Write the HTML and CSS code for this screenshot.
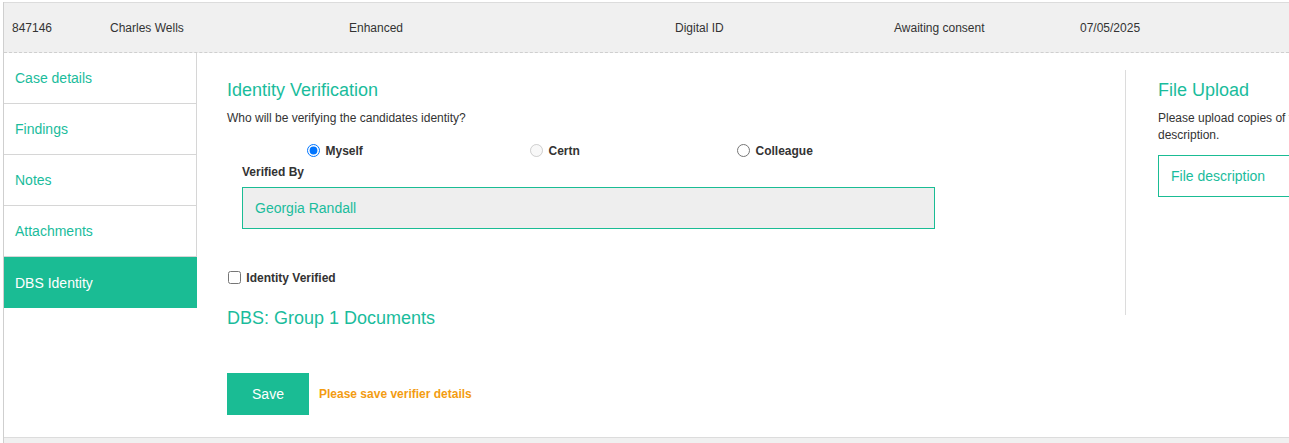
FILE: index.html
```html
<!DOCTYPE html>
<html lang="en">
<head>
    <meta charset="UTF-8">
    <meta name="viewport" content="width=device-width, initial-scale=1.0">
    <title>DBS Identity - Case 847146</title>
    <link rel="stylesheet" href="styles.css">
</head>
<body>
    <div class="page">
        <!-- Resumo do caso -->
        <div class="case-bar">
            <span>847146</span>
            <span>Charles Wells</span>
            <span>Enhanced</span>
            <span>Digital ID</span>
            <span>Awaiting consent</span>
            <span>07/05/2025</span>
        </div>

        <div class="case-body">
            <nav class="case-nav">
                <a href="#" class="nav-item">Case details</a>
                <a href="#" class="nav-item">Findings</a>
                <a href="#" class="nav-item">Notes</a>
                <a href="#" class="nav-item">Attachments</a>
                <a href="#" class="nav-item active">DBS Identity</a>
            </nav>

            <main class="case-main">
                <h2 class="section-title">Identity Verification</h2>
                <p class="question">Who will be verifying the candidates identity?</p>

                <div class="verifier-options">
                    <label class="option"><input type="radio" name="verifier" checked> Myself</label>
                    <label class="option"><input type="radio" name="verifier" disabled> Certn</label>
                    <label class="option"><input type="radio" name="verifier"> Colleague</label>
                </div>

                <div class="field">
                    <label class="field-label">Verified By</label>
                    <div class="field-value">Georgia Randall</div>
                </div>

                <label class="check"><input type="checkbox"> Identity Verified</label>

                <h2 class="section-title docs-title">DBS: Group 1 Documents</h2>

                <div class="actions">
                    <button class="btn-save">Save</button>
                    <span class="warning">Please save verifier details</span>
                </div>
            </main>

            <aside class="upload">
                <h2 class="section-title">File Upload</h2>
                <p class="upload-text">Please upload copies of the identity documents, adding a file description.</p>
                <div class="upload-input">File description</div>
            </aside>
        </div>

        <footer class="page-foot"></footer>
    </div>
</body>
</html>
```

FILE: styles.css
```css
body {
    font-family: "Liberation Sans", Arial, sans-serif;
    margin: 0;
    padding: 0;
    background-color: #fff;
    color: #333;
    overflow: hidden;
}

.page {
    margin: 2px 0 0 3px;
    border-left: 1px solid #cfcfcf;
    min-height: 441px;
    display: flex;
    flex-direction: column;
}

/* barra com os dados do caso */
.case-bar {
    display: grid;
    grid-template-columns: 98px 239px 326px 219px 186px 1fr;
    align-items: center;
    height: 49px;
    padding-left: 8px;
    background-color: #f0f0f0;
    border-top: 1px solid #dcdcdc;
    border-bottom: 1px dashed #cfcfcf;
    font-size: 12px;
}

.case-body {
    display: flex;
    flex: 1;
}

.case-nav {
    width: 193px;
    flex-shrink: 0;
    display: flex;
    flex-direction: column;
}

.nav-item {
    display: flex;
    align-items: center;
    height: 50px;
    padding-left: 11px;
    border-bottom: 1px solid #d6d6d6;
    border-right: 1px solid #d6d6d6;
    color: #1abc9c;
    font-size: 14px;
    text-decoration: none;
}

.nav-item.active {
    background-color: #1abc94;
    border-color: #1abc94;
    color: #fff;
    height: 51px;
    border-bottom: none;
}

.case-main {
    width: 868px;
    flex-shrink: 0;
    padding: 17px 30px 22px;
}

.section-title {
    margin: 10px 0 0;
    font-size: 18px;
    line-height: 20px;
    font-weight: normal;
    color: #1abc9c;
}

.question {
    margin: 10px 0 0;
    font-size: 12px;
    line-height: 17px;
}

.verifier-options {
    display: grid;
    grid-template-columns: repeat(3, 220px);
    justify-items: center;
    margin: 16px 0 0 -2px;
    font-size: 12px;
    line-height: 16px;
    font-weight: bold;
}

.option input {
    margin: 0 2px 0 0;
    vertical-align: -2px;
}

.field {
    margin-left: 15px;
}

.field-label {
    display: block;
    margin-top: 6px;
    font-size: 12px;
    line-height: 14px;
    font-weight: bold;
}

.field-value {
    margin-top: 8px;
    width: 679px;
    height: 40px;
    line-height: 40px;
    padding-left: 12px;
    background-color: #eeeeee;
    border: 1px solid #1abc94;
    color: #1abc9c;
    font-size: 14px;
}

.check {
    display: block;
    margin-top: 41px;
    font-size: 12px;
    line-height: 16px;
    font-weight: bold;
}

.check input {
    margin: 0 2px 0 1px;
    vertical-align: -2px;
}

.docs-title {
    margin-top: 22px;
}

.actions {
    display: flex;
    align-items: center;
    gap: 10px;
    margin-top: 45px;
}

.btn-save {
    width: 82px;
    height: 42px;
    border: none;
    background-color: #1abc94;
    color: #fff;
    font-family: inherit;
    font-size: 14px;
    cursor: pointer;
}

.warning {
    color: #f39c12;
    font-size: 12px;
    font-weight: bold;
}

.upload {
    width: 360px;
    flex-shrink: 0;
    align-self: flex-start;
    height: 245px;
    margin-top: 17px;
    padding-left: 32px;
    border-left: 1px solid #dcdcdc;
}

.upload-text {
    margin: 10px 0 0;
    font-size: 12px;
    line-height: 17px;
}

.upload-input {
    margin-top: 11px;
    height: 40px;
    line-height: 40px;
    padding-left: 12px;
    border: 1px solid #1abc94;
    color: #1abc9c;
    font-size: 14px;
}

.page-foot {
    height: 6px;
    background-color: #f0f0f0;
    border-top: 1px solid #dcdcdc;
}
```
